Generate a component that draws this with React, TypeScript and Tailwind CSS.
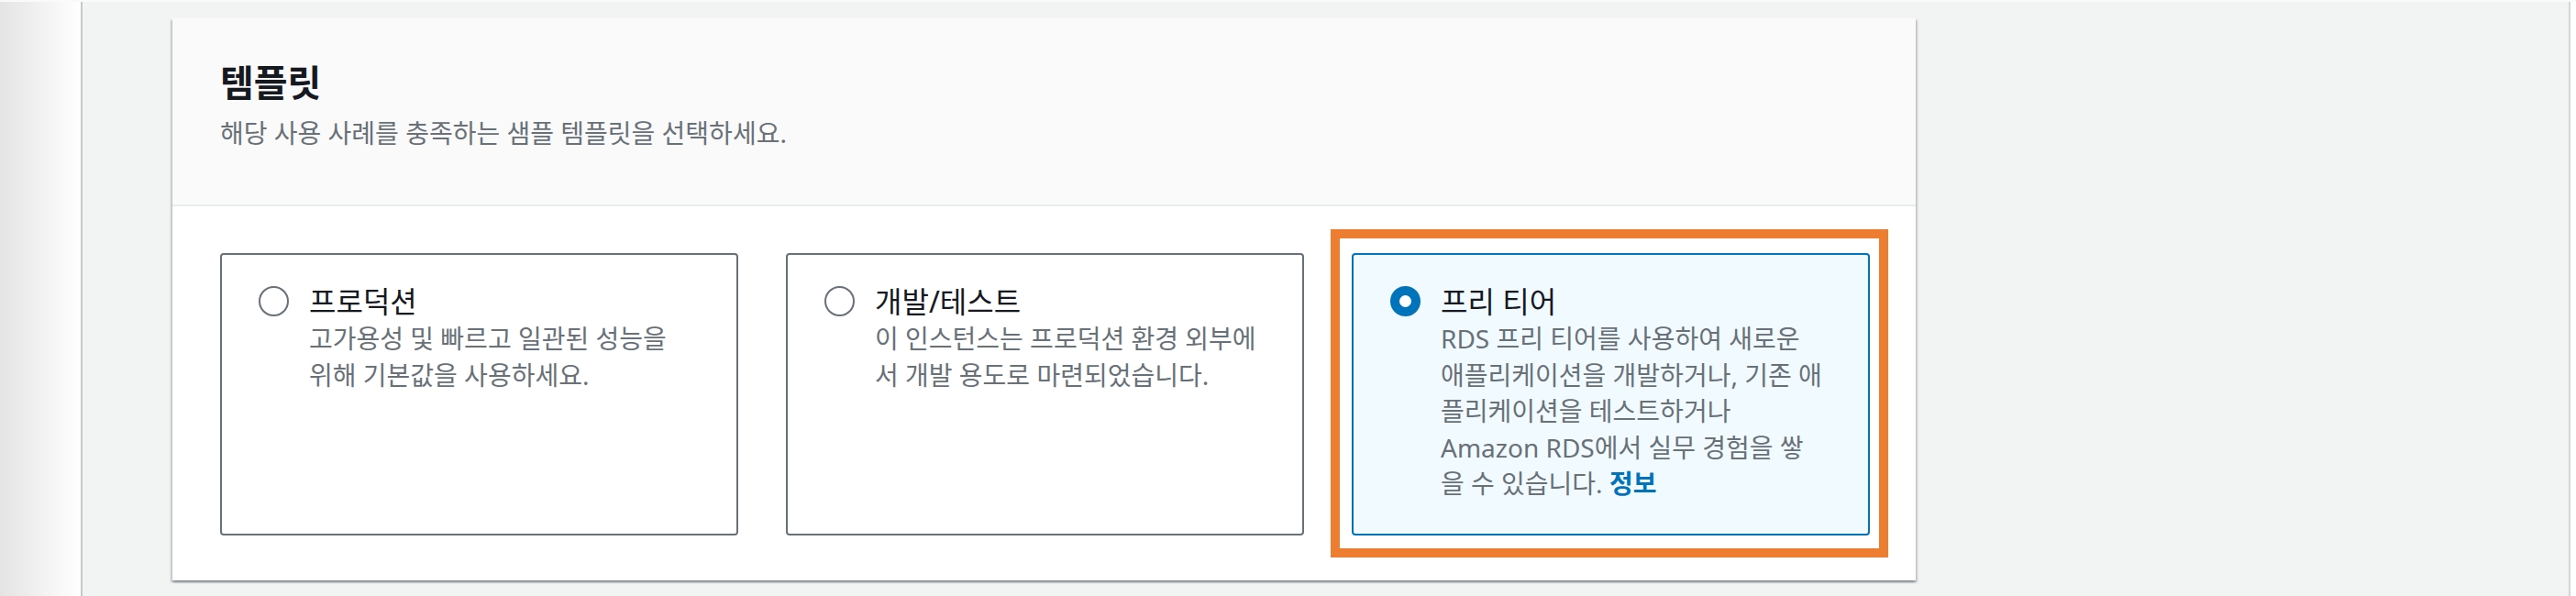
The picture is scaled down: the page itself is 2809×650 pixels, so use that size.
import React from "react";

const FONT = '"Noto Sans", "Noto Sans CJK KR", sans-serif';

function Radio({ checked }: { checked?: boolean }) {
  return checked ? (
    <div className="mt-[4px] h-[33px] w-[33px] shrink-0 rounded-full border-[10px] border-[#0073bb] bg-white" />
  ) : (
    <div className="mt-[4px] h-[33px] w-[33px] shrink-0 rounded-full border-2 border-[#687078] bg-white" />
  );
}

function Tile({
  title,
  lines,
  checked,
  link,
}: {
  title: string;
  lines: string[];
  checked?: boolean;
  link?: string;
}) {
  return (
    <div
      className={
        "flex h-[308px] gap-[22px] rounded-[4px] border-2 pl-[40px] pr-[40px] pt-[30px] " +
        (checked ? "border-[#0073bb] bg-[#f1faff]" : "border-[#687078] bg-white")
      }
    >
      <Radio checked={checked} />
      <div className="flex flex-col">
        <div className="whitespace-nowrap text-[32px] leading-[42px] text-[#16191f]">{title}</div>
        {lines.map((l, i) => (
          <div key={i} className="whitespace-nowrap text-[28px] leading-[39.5px] text-[#687078]">
            {l}
            {link && i === lines.length - 1 ? (
              <>
                {" "}
                <span className="font-bold text-[#0073bb]">{link}</span>
              </>
            ) : null}
          </div>
        ))}
      </div>
    </div>
  );
}

export default function App() {
  return (
    <div
      className="flex h-[650px] w-[2809px] border-t-2 border-[#fafafa] bg-white"
      style={{ fontFamily: FONT }}
    >
      <div className="h-full w-[88px] bg-gradient-to-r from-[#e4e4e4] to-[#ffffff]" />
      <div className="h-full w-[2px] bg-[#c6caca]" />
      <div className="h-full flex-1 bg-[#f2f3f3] pl-[98px] pt-[18px]">
        <div className="w-[1901px] bg-white shadow-[0_2px_2px_0_rgba(0,28,36,0.3),2px_2px_2px_0_rgba(0,28,36,0.15),-2px_2px_2px_0_rgba(0,28,36,0.15)]">
          <div className="border-b-2 border-[#eaeded] bg-[#fafafa] pb-[58px] pl-[52px] pt-[47px]">
            <div className="text-[40px] font-bold leading-[46px] text-[#16191f]">템플릿</div>
            <div className="mt-[12px] text-[28px] leading-[40px] text-[#687078]">
              해당 사용 사례를 충족하는 샘플 템플릿을 선택하세요.
            </div>
          </div>
          <div className="grid grid-cols-3 gap-[52px] pb-[49px] pl-[52px] pr-[50px] pt-[51px]">
            <Tile
              title="프로덕션"
              lines={["고가용성 및 빠르고 일관된 성능을", "위해 기본값을 사용하세요."]}
            />
            <Tile
              title="개발/테스트"
              lines={["이 인스턴스는 프로덕션 환경 외부에", "서 개발 용도로 마련되었습니다."]}
            />
            <div className="relative">
              <Tile
                checked
                title="프리 티어"
                lines={[
                  "RDS 프리 티어를 사용하여 새로운",
                  "애플리케이션을 개발하거나, 기존 애",
                  "플리케이션을 테스트하거나",
                  "Amazon RDS에서 실무 경험을 쌓",
                  "을 수 있습니다.",
                ]}
                link="정보"
              />
              <div className="pointer-events-none absolute -bottom-[24px] -left-[23px] -right-[20px] -top-[26px] border-[10px] border-[#ed7d31]" />
            </div>
          </div>
        </div>
      </div>
      <div className="h-full w-[2px] bg-[#d3d6d6]" />
      <div className="h-full w-[6px] bg-white" />
    </div>
  );
}
